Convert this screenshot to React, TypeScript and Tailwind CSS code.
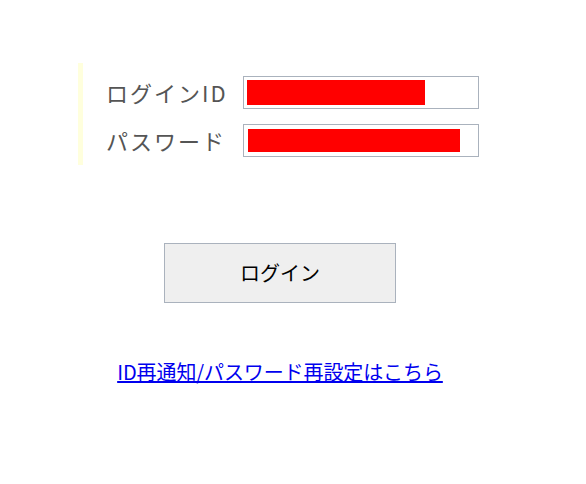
export default function App() {
  const font = "font-['Noto_Sans_CJK_JP','Noto_Sans',sans-serif]"

  return (
    <div className={`min-h-[484px] bg-white ${font}`}>
      <div className="ml-[78px] w-[404px] pt-[63px]">
        <div className="border-l-[5px] border-[#ffffdd] pl-[23px] pt-[13px] pb-[8px] flex flex-col gap-[15px]">
          <div className="flex items-center">
            <span className="w-[137px] text-[22px] leading-[33px] tracking-[2px] text-[#555]">ログインID</span>
            <div className="w-[236px] h-[33px] border border-[#aab2bd] bg-white p-[3px] pr-[53px]">
              <div className="h-full bg-[#ff0000]" />
            </div>
          </div>
          <div className="flex items-center">
            <span className="w-[137px] text-[22px] leading-[33px] tracking-[2px] text-[#555]">パスワード</span>
            <div className="w-[236px] h-[33px] border border-[#aab2bd] bg-white pl-[4px] pr-[18px] py-[4px]">
              <div className="h-full bg-[#ff0000]" />
            </div>
          </div>
        </div>

        <div className="mt-[78px] flex justify-center">
          <button
            type="button"
            className="w-[232px] h-[60px] bg-[#efefef] border border-[#aab2bd] text-[20px] leading-[58px] text-black"
          >
            ログイン
          </button>
        </div>

        <div className="mt-[55px] text-center">
          <a href="#" className="text-[20px] leading-[28px] tracking-[-0.1px] text-[#0000ee] underline">
            ID再通知/パスワード再設定はこちら
          </a>
        </div>
      </div>
    </div>
  )
}
